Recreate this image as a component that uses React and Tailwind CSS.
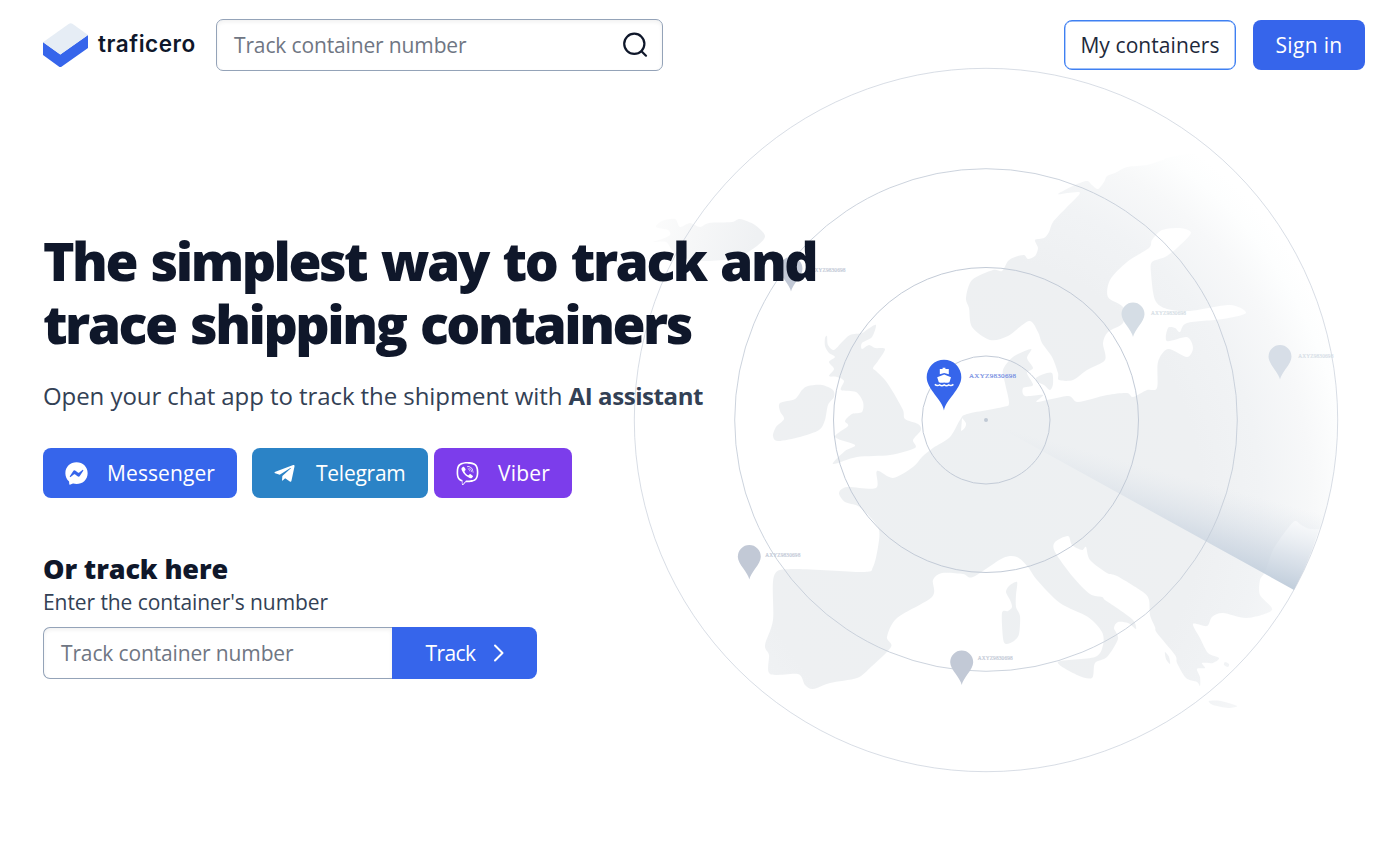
import React from "react";
import { FaFacebookMessenger, FaTelegramPlane, FaViber } from "react-icons/fa";

// Closed Catmull-Rom curve through a flat "x,y x,y" list of coast points.
function smooth(list) {
  const p = list.trim().split(/\s+/).map((s) => s.split(",").map(Number));
  const n = p.length;
  const k = 7;
  let d = `M${p[0][0]},${p[0][1]}`;
  for (let i = 0; i < n; i++) {
    const a = p[(i - 1 + n) % n];
    const b = p[i];
    const c = p[(i + 1) % n];
    const e = p[(i + 2) % n];
    d += `C${b[0] + (c[0] - a[0]) / k},${b[1] + (c[1] - a[1]) / k} ${c[0] - (e[0] - b[0]) / k},${c[1] - (e[1] - b[1]) / k} ${c[0]},${c[1]}`;
  }
  return d + "Z";
}

const MAINLAND = `1187,154 1163,160 1147,165 1127,167 1115,173 1107,176 1104,182 1098,189 1092,185 1087,181 1075,185
1058,194 1068,193 1080,193 1066,208 1053,222 1049,232 1044,238 1035,240 1038,248 1035,256 1028,259 1024,255 1015,257 1008,261 1002,271
993,270 972,280 966,298 969,308 972,327 990,340 1008,336 1029,321 1038,332 1042,343 1052,357 1058,373 1059,380 1073,380 1087,370
1105,360 1103,343 1108,332 1123,323 1123,307 1108,297 1110,280 1127,262 1149,248 1152,240 1162,230 1180,228 1191,233
1177,248 1165,257 1152,262 1151,273 1155,300 1167,309 1190,311 1230,305 1246,313 1223,319 1187,323 1180,332 1175,328
1168,328 1167,341 1187,337 1193,348 1187,357 1168,349 1158,362 1157,388 1147,390 1133,397 1127,393 1107,395 1078,402
1068,396 1037,402 1043,395 1025,396 1023,388 1033,385 1027,373 1033,368 1027,358 1031,349 1013,357 1003,370 1005,383
1009,403 1003,407 967,414 960,420 950,437 933,448 922,457 913,467 893,478 877,471 876,488 847,487 839,493 845,502
858,506 870,517 879,530 878,547 873,567 863,572 793,569 774,576 773,620 765,645 769,655 770,674 798,674 805,685
813,689 830,683 857,678 870,668 891,647 887,637 897,618 932,597 933,580 942,573 963,574 973,577 1003,558 1017,557
1028,567 1037,580 1060,603 1088,617 1102,632 1103,645 1095,657 1058,662 1077,675 1092,678 1095,663 1107,657 1118,639
1114,628 1118,622 1128,623 1136,629 1133,620 1117,608 1105,600 1102,597 1090,594 1073,577 1055,552 1055,542 1068,536
1072,545 1082,550 1086,547 1090,560 1107,573 1117,576 1143,592 1149,600 1150,615 1155,627 1157,633 1175,655 1177,663
1186,678 1197,682 1200,686 1200,677 1197,669 1205,668 1202,663 1213,663 1219,658 1208,653 1200,638 1193,624 1207,626
1212,617 1223,613 1247,618 1272,610 1260,595 1260,580 1265,572 1273,550 1285,532 1295,521 1303,526 1319,529 1390,520
1390,120`;

const ICELAND = `653,242 662,239 670,235 668,230 656,227 662,221 675,219 680,227 690,223 700,227 709,223 732,222 740,219 755,225 765,236 757,246 738,257 710,261 682,258 672,250 666,242`;

const ISLANDS = [
  // Great Britain
  `876,325 868,329 862,333 850,335 842,342 834,350 828,345 827,336 825,338 825,346 829,353 835,357 829,362 834,369 829,376 837,377 844,381 841,390 856,392 863,402 862,412 852,414 845,421 848,426 835,437 855,445 845,451 833,464 857,457 890,455 915,448 913,440 921,430 918,424 905,419 903,410 893,392 885,380 876,371 873,368 878,361 885,349 875,348 869,345 862,349 862,343 872,337`,
  // Ireland
  `808,386 822,385 833,390 834,397 828,405 825,420 819,430 800,437 778,441 773,436 776,427 784,419 780,411 780,403 795,399 802,390`,
  // Corsica and Sardinia
  `1017,582 1016,595 1016,607 1020,616 1019,634 1014,641 1006,644 1003,638 1002,613 1008,611 1012,607 1010,600 1006,592 1009,586`,
  // Zealand
  `1036,378 1044,374 1052,373 1053,384 1050,390 1044,385 1038,382`,
  // Ionian and Aegean islands
  `1165,652 1169,657 1170,664 1166,659`,
  `1225,662 1229,664 1228,667 1224,665`,
  // Crete
  `1209,701 1221,701 1237,706 1228,708 1213,705`,
];

const RINGS = [
  { r: 64, o: 1 },
  { r: 152.5, o: 1 },
  { r: 251.3, o: 0.85 },
  { r: 351.7, o: 0.65 },
];

const PINS = [
  { x: 791, y: 257, tx: 19.5, ty: 15, fill: "#c2c9d6" },
  { x: 749.3, y: 545, tx: 16, ty: 12, fill: "#c2c9d6" },
  { x: 961.7, y: 650.5, tx: 16, ty: 9.5, fill: "#c2c9d6" },
  { x: 1133, y: 302.5, tx: 18, ty: 12.5, fill: "#d5dde5" },
  { x: 1280, y: 345, tx: 18.3, ty: 13, fill: "#d7dee7" },
];

function RadarMap() {
  return (
    <svg className="pointer-events-none absolute left-0 top-0 h-[843px] w-[1400px]" viewBox="0 0 1400 843" aria-hidden="true">
      <defs>
        <clipPath id="range">
          <circle cx="986" cy="420" r="351.7" />
        </clipPath>
        <radialGradient id="land" gradientUnits="userSpaceOnUse" cx="0" cy="0" r="392" gradientTransform="translate(975 505) scale(1 1.09)">
          <stop offset="0" stopColor="#edf0f2" />
          <stop offset="0.58" stopColor="#eef0f2" />
          <stop offset="0.73" stopColor="#f1f3f5" />
          <stop offset="0.86" stopColor="#f7f8f9" />
          <stop offset="0.95" stopColor="#fdfefe" />
          <stop offset="1" stopColor="#ffffff" />
        </radialGradient>
        <linearGradient id="iceland" gradientUnits="userSpaceOnUse" x1="650" y1="222" x2="750" y2="255">
          <stop offset="0" stopColor="#fcfcfc" />
          <stop offset="1" stopColor="#eff1f3" />
        </linearGradient>
        <linearGradient id="sweep" gradientUnits="userSpaceOnUse" x1="1315" y1="512" x2="1294" y2="590">
          <stop offset="0" stopColor="#dfe5ec" stopOpacity="0" />
          <stop offset="0.25" stopColor="#d6dee7" stopOpacity="0.3" />
          <stop offset="0.6" stopColor="#cbd5e1" stopOpacity="0.66" />
          <stop offset="1" stopColor="#c0cddb" />
        </linearGradient>
      </defs>
      <g clipPath="url(#range)">
        <path d={smooth(MAINLAND)} fill="url(#land)" />
      </g>
      <path d={smooth(ICELAND)} fill="url(#iceland)" />
      {ISLANDS.map((s) => (
        <path key={s} d={smooth(s)} fill="url(#land)" />
      ))}
      <path d="M962,418 Q967,423 966,425 Q965,429 961,431 Z" fill="#fff" />
      <path d="M986,420 L1294,590 A351.7,351.7 0 0 0 1324,512 Z" fill="url(#sweep)" />
      {RINGS.map(({ r, o }) => (
        <circle key={r} cx="986" cy="420" r={r} fill="none" stroke="#c3cbd7" strokeWidth="1" opacity={o} />
      ))}
      <circle cx="986" cy="420" r="2" fill="#c0c9d5" />
      {PINS.map(({ x, y, tx, ty, fill }) => (
        <g key={x} transform={`translate(${x} ${y})`}>
          <path d="M0,34.5 C-1,28 -11.5,19 -11.5,11.8 A11.5,11.8 0 0 1 11.5,11.8 C11.5,19 1,28 0,34.5 Z" fill={fill} />
          <text x={tx} y={ty} fontSize="5.3" textLength="35" fill={fill} stroke={fill} strokeWidth="0.2" className="font-['Liberation_Serif',serif]">
            AXYZ9830698
          </text>
        </g>
      ))}
      <path d="M944,410.5 C942.5,400 926.7,389 926.7,377.2 A17.3,17.5 0 0 1 961.3,377.2 C961.3,389 945.5,400 944,410.5 Z" fill="#3665eb" />
      <g fill="#fff">
        <path d="M939.8,369 H942.6 V367.8 H945.4 V369 H948.8 V374.2 L944.2,373 L939.8,374.2 Z" />
        <path d="M937.2,377.2 L944.2,374.6 L951,377.2 L949.4,382.2 Q946.8,383.2 944.2,382.4 Q941.4,383.2 938.8,382.2 Z" />
        <path d="M934.8,384.4 Q937.2,386.4 939.6,384.9 Q941.9,386.4 944.2,384.9 Q946.5,386.4 948.8,384.9 Q951.2,386.4 953.4,384.4" fill="none" stroke="#fff" strokeWidth="1.5" />
      </g>
      <text x="969" y="378" fontSize="7" textLength="47" fill="#6f8ae2" stroke="#6f8ae2" strokeWidth="0.15" className="font-['Liberation_Serif',serif]">
        AXYZ9830698
      </text>
    </svg>
  );
}

function Logo() {
  return (
    <a className="flex w-[153px] items-center gap-[10px]">
      <svg className="h-[45px] w-[45px] shrink-0" viewBox="0 0 45 45">
        <path d="M0,19 L17.3,31.5 L45,12 V25 L18.8,43.5 Q17.3,44.5 15.8,43.5 L0,32 Z" fill="#3665eb" />
        <path d="M0,19.3 L26,0.8 Q27.7,-0.5 29.4,0.8 L45,12 L17.3,31.5 Z" fill="#e6edf5" />
      </svg>
      <span className="-mt-[2px] whitespace-nowrap font-[Inter,sans-serif] text-[22.5px] font-semibold leading-none tracking-[0.55px] text-[#0f172a]">traficero</span>
    </a>
  );
}

const field = "border border-[#94a3b8] bg-white shadow-[inset_0_2px_4px_rgba(0,0,0,0.06)]";

export default function App() {
  return (
    <div className="relative h-[843px] w-[1400px] overflow-hidden bg-white font-['Open_Sans','Noto_Sans',sans-serif] text-[21px] text-[#0f172a]">
      <RadarMap />
      <div className="relative">
        <header className="flex items-center pl-[43px] pr-[35px] pt-[19px]">
          <Logo />
          <div className={`ml-5 flex h-[52px] w-[447px] items-center justify-between rounded-[7px] pl-[17px] pr-[13px] ${field}`}>
            <span className="pt-[2px] tracking-[-0.14px] text-[#6f7683]">Track container number</span>
            <svg className="h-7 w-7" viewBox="0 0 28 28" fill="none" stroke="#0f172a" strokeWidth="2.2" strokeLinecap="round">
              <circle cx="13.3" cy="12.8" r="10.1" />
              <path d="M20.5,20.2 L25,24.7" />
            </svg>
          </div>
          <nav className="ml-auto flex gap-[17px]">
            <button className="flex h-[50px] w-[172px] items-center justify-center rounded-[8px] border border-[#3f80f2] bg-white pt-[2px] tracking-[0.08px] text-[#1e293b] shadow-[inset_0_0_0_0.4px_#3f80f2]">
              My containers
            </button>
            <button className="flex h-[50px] w-[112px] items-center justify-center rounded-[8px] bg-[#3665eb] pt-[2px] tracking-[0.35px] text-white">Sign in</button>
          </nav>
        </header>

        <main className="pl-[43px] pt-[158px]">
          <h1 className="whitespace-nowrap text-[53.5px] font-extrabold leading-[63px] tracking-[-2.5px] [word-spacing:3.2px]">
            The simplest way to track and
            <br />
            trace shipping containers
          </h1>
          <p className="mt-[23px] whitespace-nowrap text-[24px] leading-[36px] tracking-[-0.07px] text-[#334155]">
            Open your chat app to track the shipment with <b className="font-bold tracking-[-0.42px]">AI assistant</b>
          </p>

          <div className="mt-[34px] flex text-white">
            <button className="flex h-[50px] w-[194px] items-center rounded-[8px] bg-[#3665eb] pl-[22px]">
              <FaFacebookMessenger className="mr-[19px] h-[23px] w-[23px]" />
              <span className="pt-[2px] tracking-[0.1px]">Messenger</span>
            </button>
            <button className="ml-[15px] flex h-[50px] w-[176px] items-center rounded-[8px] bg-[#2b83c6] pl-[21px]">
              <FaTelegramPlane className="mr-[20px] h-[23px] w-[23px]" />
              <span className="pt-[2px] tracking-[-0.25px]">Telegram</span>
            </button>
            <button className="ml-[6px] flex h-[50px] w-[138px] items-center rounded-[8px] bg-[#7c3deb] pl-[22px]">
              <FaViber className="mr-[19px] h-[23px] w-[23px]" />
              <span className="pt-[2px] tracking-[0.2px]">Viber</span>
            </button>
          </div>

          <h2 className="mt-[53px] text-[27px] font-extrabold leading-[36px] tracking-[-0.12px]">Or track here</h2>
          <p className="-mt-px leading-[32px] tracking-[-0.08px] text-[#334155]">Enter the container's number</p>
          <form className="mt-[9px] flex h-[52px]">
            <div className={`flex w-[349px] items-center rounded-l-[7px] border-r-0 pl-[17px] ${field}`}>
              <span className="pt-[2px] tracking-[-0.14px] text-[#6f7683]">Track container number</span>
            </div>
            <button type="button" className="flex w-[145px] items-center rounded-r-[8px] bg-[#3665eb] pl-[33.5px] text-white">
              <span className="w-[50px] pt-[2px] tracking-[-0.6px]">Track</span>
              <svg className="ml-[17px] h-[18px] w-[12px]" viewBox="0 0 12 18" fill="none" stroke="#fff" strokeWidth="2" strokeLinecap="round" strokeLinejoin="round">
                <path d="M2,1.5 L9.5,9 L2,16.5" />
              </svg>
            </button>
          </form>
        </main>
      </div>
    </div>
  );
}
